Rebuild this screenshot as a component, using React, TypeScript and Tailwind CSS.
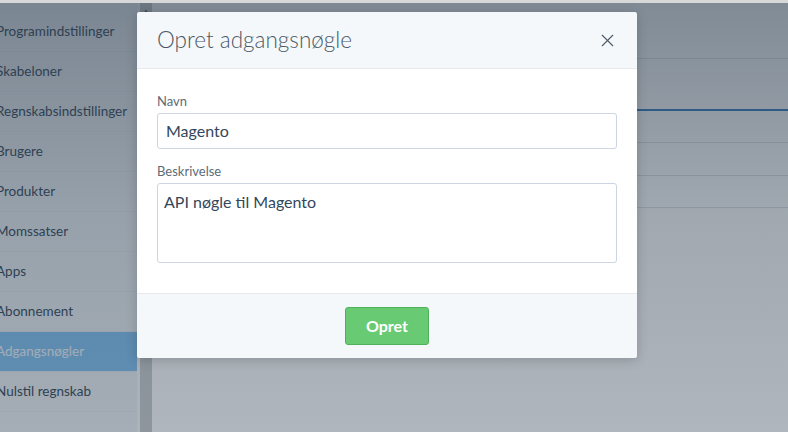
import { X } from 'lucide-react';

const menu = [
  'Programindstillinger',
  'Skabeloner',
  'Regnskabsindstillinger',
  'Brugere',
  'Produkter',
  'Momssatser',
  'Apps',
  'Abonnement',
  'Adgangsnøgler',
  'Nulstil regnskab',
];

export default function App() {
  return (
    <div className="relative w-[788px] h-[432px] overflow-hidden bg-white" style={{ fontFamily: 'Lato, "Open Sans", sans-serif' }}>
      <div className="h-[3px] bg-[#d8d8d8]" />

      {/* page behind the dialog */}
      <div className="flex h-[429px]">
        <aside className="w-[137px] shrink-0 bg-[#eef2f5] pt-[9px] overflow-hidden">
          {menu.map((item) => {
            const active = item === 'Adgangsnøgler';
            return (
              <div
                key={item}
                className={`h-10 flex items-center border-b border-[#e6ebf0] whitespace-nowrap text-[13.5px] ${active ? 'bg-[#80c0f2] text-[#f2f8fd]' : 'text-[#2f4254]'}`}
              >
                <span className="-ml-[4px]">{item}</span>
              </div>
            );
          })}
        </aside>
        <div className="w-[3px] bg-[#fbfbfb]" />
        <div className="w-[12px] bg-[#c9cbcd] flex justify-center pt-[4px]">
          <span className="text-[8px] leading-none text-[#555]">▲</span>
        </div>
        <main className="flex-1 pt-[54px] pl-[10px]">
          <div className="border-b border-[#dde2e7] h-[2px]" />
          <div className="border-b-2 border-[#2f7bbf] h-[52px]" />
          <div className="border-b border-[#dde2e7] h-[32px]" />
          <div className="border-b border-[#dde2e7] h-[33px]" />
          <div className="border-b border-[#dde2e7] h-[32px]" />
        </main>
      </div>

      {/* dimming overlay */}
      <div className="absolute inset-0 top-[3px] bg-gradient-to-b from-[#2d3e50]/60 via-[#2d3e50]/45 to-[#2d3e50]/38" />

      {/* dialog */}
      <div className="absolute left-[137px] top-[12px] w-[500px] rounded-[3px] overflow-hidden bg-white shadow-[0_2px_12px_rgba(0,0,0,0.18)]">
        <div className="h-[57px] bg-[#f5f8fa] border-b border-[#e5eaef] flex items-center justify-between pl-[20px] pr-[19px]">
          <h2 className="text-[22.5px] font-light text-[#4b5967]">Opret adgangsnøgle</h2>
          <X className="w-[21px] h-[21px] text-[#4b5967]" strokeWidth={1.3} />
        </div>
        <div className="px-[20px] pt-[24px] pb-[30px]">
          <label className="block text-[13px] leading-[16px] text-[#5d6b79] mb-[4px]">Navn</label>
          <div className="h-[36px] border border-[#cbd6e2] rounded-[3px] flex items-center px-[8px] text-[16px] text-[#33475b]">
            Magento
          </div>
          <label className="block text-[13px] leading-[16px] text-[#5d6b79] mt-[14px] mb-[4px]">Beskrivelse</label>
          <div className="h-[80px] border border-[#cbd6e2] rounded-[3px] px-[6px] pt-[6px] text-[16px] text-[#33475b]">
            API nøgle til Magento
          </div>
        </div>
        <div className="h-[65px] bg-[#f5f8fa] border-t border-[#e5eaef] flex items-center justify-center">
          <button className="w-[84px] h-[38px] rounded-[3px] bg-[#68cb74] border border-[#50b15d] text-white text-[16px] font-bold">
            Opret
          </button>
        </div>
      </div>
    </div>
  );
}
